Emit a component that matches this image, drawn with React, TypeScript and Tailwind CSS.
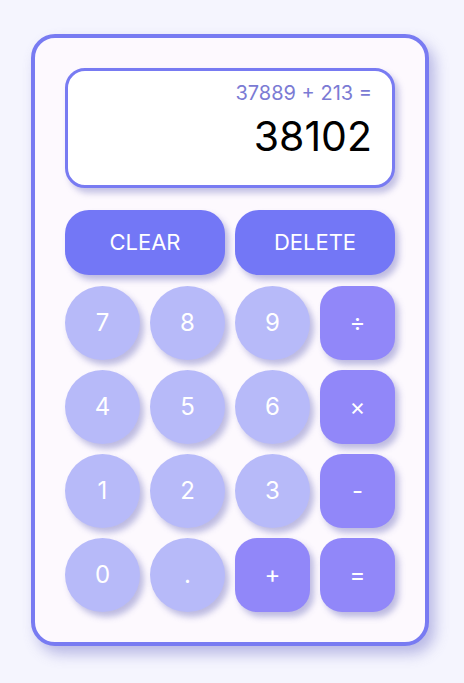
const keys = [
  { label: "7", kind: "num" },
  { label: "8", kind: "num" },
  { label: "9", kind: "num" },
  { label: "÷", kind: "op" },
  { label: "4", kind: "num" },
  { label: "5", kind: "num" },
  { label: "6", kind: "num" },
  { label: "×", kind: "op" },
  { label: "1", kind: "num" },
  { label: "2", kind: "num" },
  { label: "3", kind: "num" },
  { label: "-", kind: "op" },
  { label: "0", kind: "num" },
  { label: ".", kind: "num" },
  { label: "+", kind: "op" },
  { label: "=", kind: "op" },
];

export default function App() {
  return (
    <div
      className="min-h-screen bg-[#f5f5fe] pl-[31px] pt-[34px]"
      style={{ fontFamily: "Inter, 'Noto Sans', sans-serif" }}
    >
      <div className="w-[398px] rounded-[24px] border-4 border-[#787bf2] bg-[#fdf9fe] p-[30px] shadow-[6px_8px_14px_rgba(110,110,200,0.45)]">
        {/* Display */}
        <div className="h-[120px] rounded-[20px] border-[3px] border-[#787bf2] bg-white px-[20px] pt-[9px] text-right shadow-[4px_5px_6px_rgba(110,110,190,0.4)]">
          <div className="text-[20px] leading-[26px] text-[#7b7bd4]">37889 + 213 =</div>
          <div className="text-[41px] leading-[56px] text-black mt-[2px]">38102</div>
        </div>

        {/* Clear / Delete */}
        <div className="mt-[22px] grid grid-cols-2 gap-[10px]">
          {["CLEAR", "DELETE"].map((t) => (
            <button
              key={t}
              className="h-[65px] rounded-[24px] bg-[#7377f6] text-[22px] text-white shadow-[4px_5px_6px_rgba(110,110,190,0.45)]"
            >
              {t}
            </button>
          ))}
        </div>

        {/* Keypad */}
        <div className="mt-[11px] grid grid-cols-4 gap-[10px]">
          {keys.map((k) =>
            k.kind === "num" ? (
              <button
                key={k.label}
                className="h-[74px] rounded-[50%] bg-[#b7baf9] text-[24px] text-white shadow-[4px_5px_6px_rgba(110,110,190,0.45)]"
              >
                {k.label}
              </button>
            ) : (
              <button
                key={k.label}
                className="h-[74px] rounded-[22px] bg-[#9187f9] text-[24px] text-white shadow-[4px_5px_6px_rgba(110,110,190,0.45)]"
              >
                {k.label}
              </button>
            )
          )}
        </div>
      </div>
    </div>
  );
}
